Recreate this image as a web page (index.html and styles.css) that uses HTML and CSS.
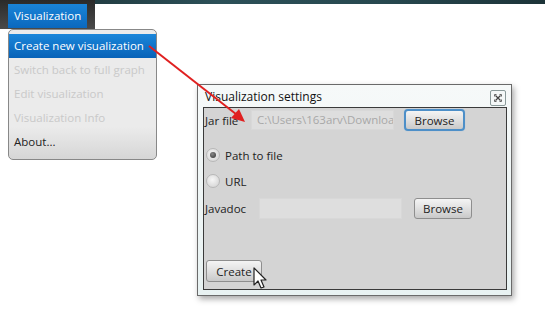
FILE: index.html
```html
<!DOCTYPE html>
<html lang="en">
<head>
    <meta charset="UTF-8">
    <title>Visualization settings</title>
    <link rel="stylesheet" href="styles.css">
</head>
<body>
    <div class="topstrip"></div>
    <div class="menubar">
        <span class="menu-title">Visualization</span>
    </div>

    <ul class="dropdown">
        <li class="active">Create new visualization</li>
        <li class="disabled">Switch back to full graph</li>
        <li class="disabled">Edit visualization</li>
        <li class="disabled">Visualization Info</li>
        <li>About...</li>
    </ul>

    <div class="dialog">
        <div class="titlebar">
            <span>Visualization settings</span>
            <span class="close">
                <svg width="8" height="8" viewBox="0 0 8 8">
                    <path d="M1.5 1.5 L6.5 6.5 M6.5 1.5 L1.5 6.5" stroke="#444" stroke-width="1.2"/>
                    <path d="M0.5 2.5 V0.5 H2.5 M5.5 0.5 H7.5 V2.5 M7.5 5.5 V7.5 H5.5 M2.5 7.5 H0.5 V5.5" fill="none" stroke="#666" stroke-width="1"/>
                </svg>
            </span>
        </div>
        <div class="panel">
            <div class="row jar-row">
                <label class="lbl">Jar file</label>
                <div class="field jar-field">C:\Users\163arv\Downloa</div>
                <button class="btn focused">Browse</button>
            </div>
            <div class="radio-row first">
                <span class="radio checked"></span>
                <span>Path to file</span>
            </div>
            <div class="radio-row">
                <span class="radio"></span>
                <span>URL</span>
            </div>
            <div class="row javadoc-row">
                <label class="lbl">Javadoc</label>
                <div class="field doc-field"></div>
                <button class="btn">Browse</button>
            </div>
            <div class="create-row">
                <button class="btn create">Create</button>
            </div>
        </div>
    </div>

    <!-- cursor over the create button -->
    <svg class="cursor" width="16" height="24" viewBox="0 0 16 24">
        <path d="M1 1 L1 18 L5 14 L8 21 L11 20 L8 13 L13 13 Z" fill="#fff" stroke="#222" stroke-width="1.2" stroke-linejoin="round"/>
    </svg>

    <!-- red annotation arrow -->
    <svg class="annotation" width="545" height="326">
        <line x1="149" y1="46" x2="241" y2="118" stroke="#e02020" stroke-width="2"/>
        <path d="M245 122 L231 118 L239 109 Z" fill="#e02020"/>
    </svg>
</body>
</html>
```

FILE: styles.css
```css
body {
    margin: 0;
    width: 545px;
    height: 326px;
    overflow: hidden;
    background: #fff;
    font-family: "Open Sans", "Noto Sans", sans-serif;
    font-size: 11.5px;
    color: #222;
    position: relative;
}
.topstrip {
    height: 4px;
    background: linear-gradient(90deg, #1b2f33, #2c5058 40%, #27484f 70%, #1c3338);
}
.menubar {
    width: 95px;
    height: 29px;
    margin-top: -4px;
    padding-top: 4px;
    box-sizing: border-box;
    background: linear-gradient(#2a2a2a, #4a4a4a);
}
.menu-title {
    display: block;
    margin-left: 8px;
    width: 79px;
    height: 24px;
    line-height: 24px;
    padding-left: 6px;
    box-sizing: border-box;
    color: #fff;
    background: linear-gradient(#1a84d8, #0a68be);
}

.dropdown {
    position: absolute;
    left: 8px;
    top: 29px;
    width: 149px;
    height: 131px;
    margin: 0;
    padding: 4px 0 0;
    box-sizing: border-box;
    list-style: none;
    border: 1px solid #888;
    border-radius: 5px;
    background: linear-gradient(#ebebeb 75%, #d6d6d6);
}
.dropdown li {
    height: 24px;
    line-height: 24px;
    padding-left: 5px;
    white-space: nowrap;
}
.dropdown li.active {
    color: #fff;
    background: linear-gradient(#1b86da, #0862b8);
}
.dropdown li.disabled {
    color: #c9c9c9;
}

.dialog {
    position: absolute;
    left: 197px;
    top: 84px;
    width: 315px;
    height: 212px;
    box-sizing: border-box;
    border: 1px solid #6a6a6a;
    background: linear-gradient(#f6f9f9, #e8f2f2);
    box-shadow: 2px 3px 6px rgba(0, 0, 0, 0.35);
    display: flex;
    flex-direction: column;
    padding: 0 4px 5px 5px;
}
.titlebar {
    height: 22px;
    display: flex;
    align-items: center;
    justify-content: space-between;
    font-size: 12px;
    color: #111;
    padding-left: 2px;
}
.close {
    width: 16px;
    height: 16px;
    box-sizing: border-box;
    border: 1px solid #8a9a9a;
    border-radius: 2px;
    background: #f4f8f8;
    display: flex;
    align-items: center;
    justify-content: center;
    margin-right: 1px;
    margin-top: 4px;
}
.panel {
    flex: 1;
    border: 1px solid #3a3a3a;
    background: #d4d4d4;
    padding: 1px 1px 0 1px;
    display: flex;
    flex-direction: column;
}
.row {
    display: flex;
    align-items: center;
}
.lbl {
    width: 46px;
    color: #222;
}
.field {
    box-sizing: border-box;
    border: 1px solid #d8d8d8;
    background: #dedede;
    color: #a8a8a8;
    padding-left: 5px;
    overflow: hidden;
    white-space: nowrap;
}
.jar-row {
    height: 22px;
}
.jar-field {
    width: 143px;
    height: 20px;
    line-height: 18px;
}
.btn {
    font-family: inherit;
    font-size: 11.5px;
    color: #222;
    border: 1px solid #8e8e8e;
    border-radius: 3px;
    background: linear-gradient(#f4f4f4, #e2e2e2 45%, #c9c9c9);
    padding: 0;
    height: 21px;
}
.jar-row .btn {
    margin-left: 10px;
    width: 61px;
    height: 22px;
}
.btn.focused {
    border: 2px solid #4d8fc8;
    border-radius: 4px;
    box-shadow: 0 0 1px #8ab8e0;
}
.radio-row {
    display: flex;
    align-items: center;
    height: 26px;
    gap: 5px;
    padding-left: 1px;
}
.radio-row.first {
    margin-top: 11px;
}
.radio {
    width: 14px;
    height: 14px;
    box-sizing: border-box;
    border-radius: 50%;
    border: 1px solid #b8b8b8;
    background: radial-gradient(circle at 45% 40%, #f6f6f6, #cfcfcf);
    position: relative;
}
.radio.checked::after {
    content: "";
    position: absolute;
    left: 3px;
    top: 3px;
    width: 6px;
    height: 6px;
    border-radius: 50%;
    background: radial-gradient(circle at 40% 35%, #888, #333);
}
.javadoc-row {
    margin-top: 3px;
    height: 22px;
}
.javadoc-row .lbl {
    width: 54px;
}
.doc-field {
    width: 143px;
    height: 21px;
}
.javadoc-row .btn {
    margin-left: 12px;
    width: 58px;
}
.create-row {
    margin-top: auto;
    padding: 0 0 7px 1px;
}
.btn.create {
    width: 56px;
    height: 22px;
}

.cursor {
    position: absolute;
    left: 253px;
    top: 267px;
}
.annotation {
    position: absolute;
    left: 0;
    top: 0;
    pointer-events: none;
}
```
